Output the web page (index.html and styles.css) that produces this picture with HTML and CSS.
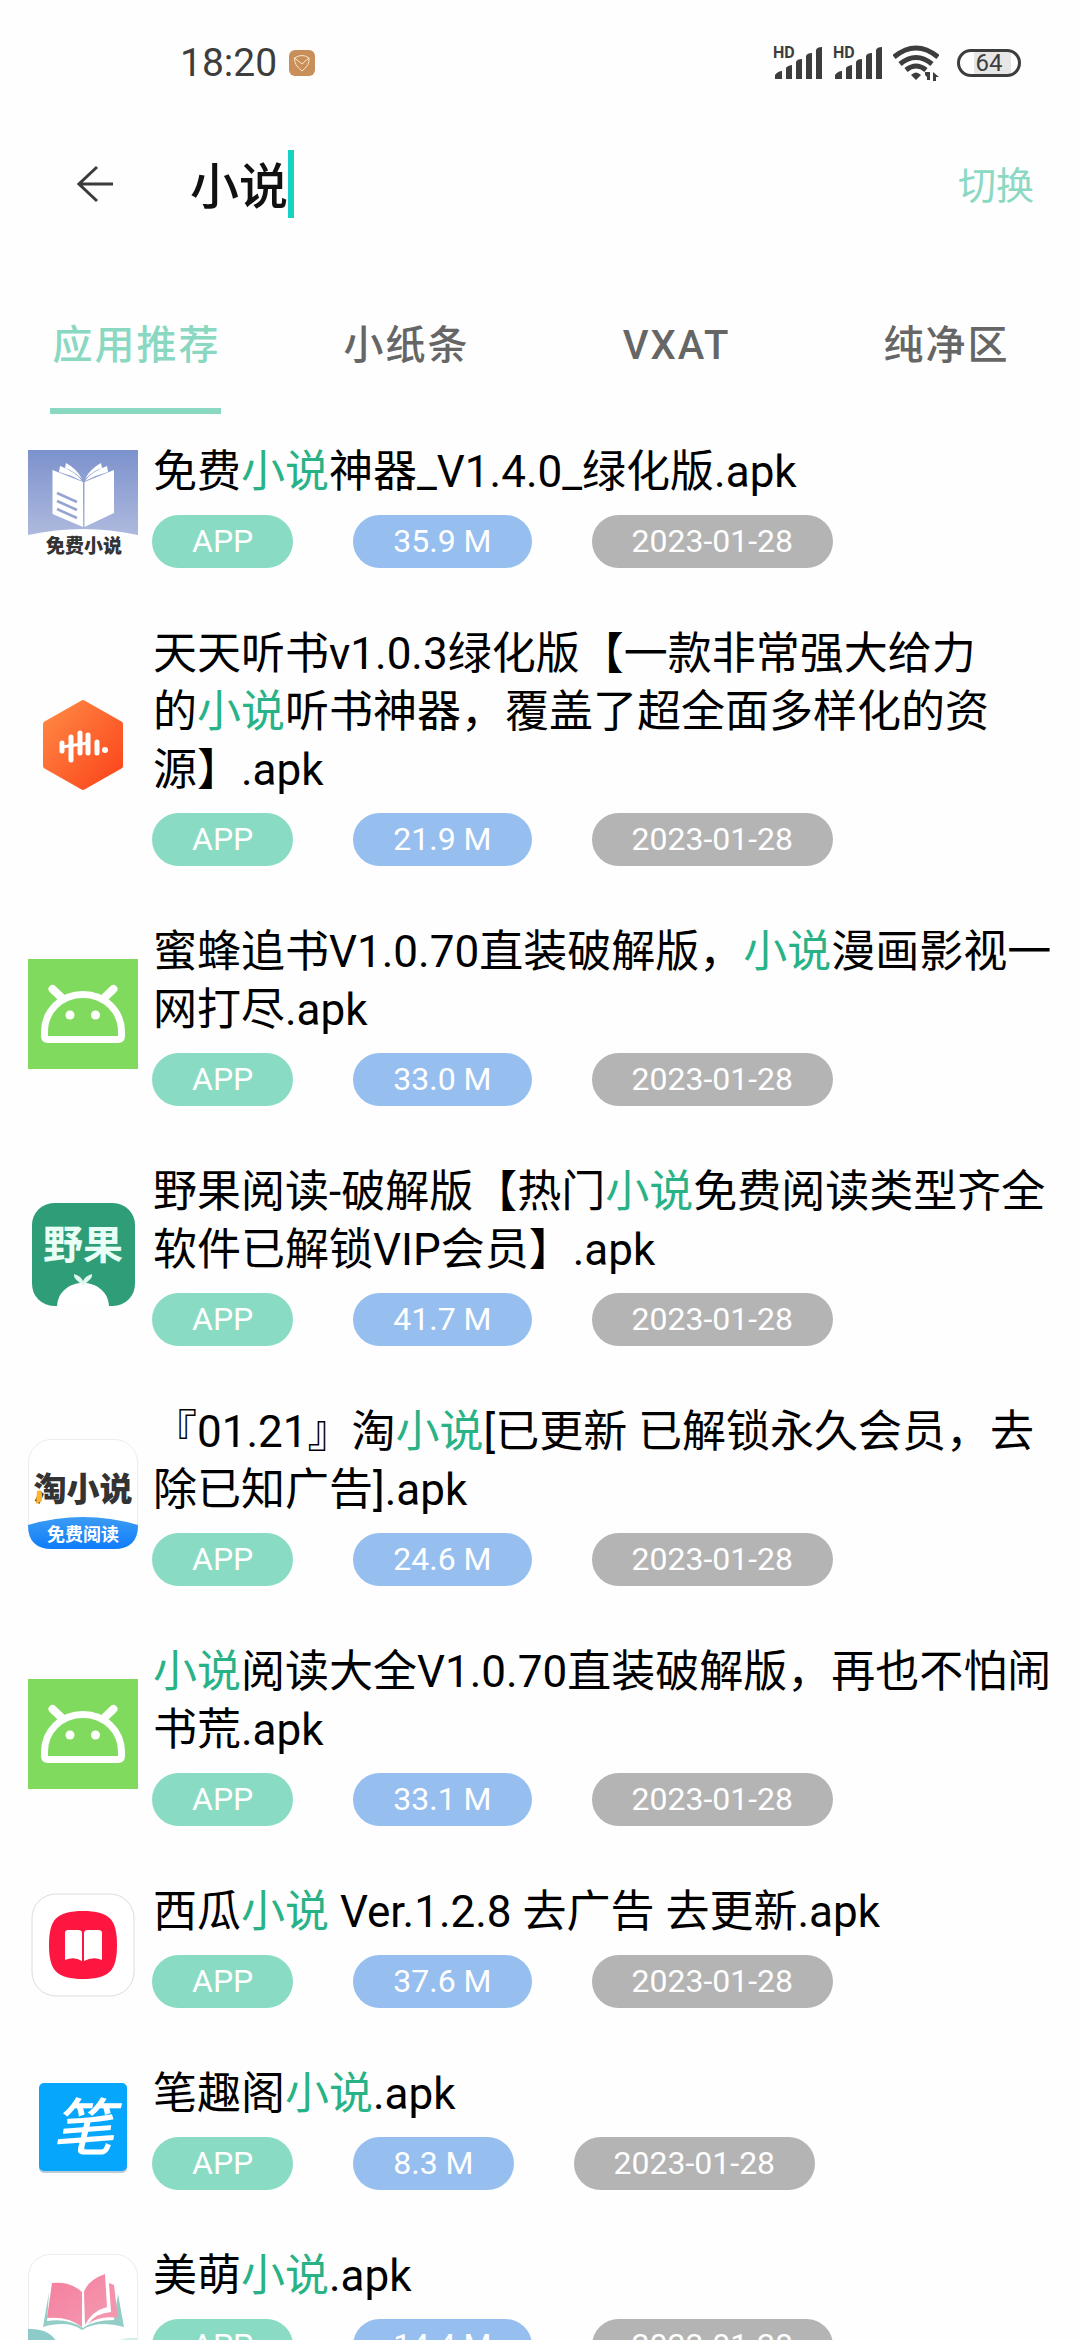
FILE: index.html
```html
<!DOCTYPE html>
<html lang="zh-CN">
<head>
<meta charset="utf-8">
<meta name="viewport" content="width=device-width, initial-scale=1">
<title>小说</title>
<link rel="stylesheet" href="styles.css">
</head>
<body>
<svg class="defs" aria-hidden="true">
  <defs>
    <linearGradient id="sky" x1="0" y1="0" x2="0" y2="1"><stop offset="0" stop-color="#7c92cd"/><stop offset="1" stop-color="#aeb9dd"/></linearGradient>
    <linearGradient id="flame" x1="0" y1="0" x2="1" y2="1"><stop offset="0" stop-color="#ff8a45"/><stop offset="1" stop-color="#fb431a"/></linearGradient>
    <linearGradient id="wave" x1="0" y1="0" x2="0" y2="1"><stop offset="0" stop-color="#3c9cf3"/><stop offset="1" stop-color="#0f7cfb"/></linearGradient>
    <linearGradient id="petal" x1="0" y1="0" x2="1" y2="1"><stop offset="0" stop-color="#f57f9c"/><stop offset="1" stop-color="#f39bb4"/></linearGradient>
    <symbol id="signal" viewBox="0 0 50 34">
      <path d="M2 33v-4q3-4 7-4v8zM13 33V22q1-2 6-3v14zM23 33V16q1-3 6-3v20zM33 33V10q1-3 6-3v26zM43 33V4q1-3 6-3v32z" fill="#3d3d3d"/>
    </symbol>
    <symbol id="robot" viewBox="0 0 110 110">
      <rect width="110" height="110" fill="#80da5d"/>
      <g fill="none" stroke="#fff" stroke-width="7">
        <path d="M20 80.500H90Q93.500 80.500 93.500 77V73C93.500 52 77 35.500 55 35.500S16.500 52 16.500 73V77Q16.500 80.500 20 80.500Z"/>
        <path d="M24.500 30 35 40M85.500 30 75 40" stroke-width="8" stroke-linecap="round"/>
      </g>
      <circle cx="42" cy="56" r="4.500" fill="#fff"/><circle cx="67.500" cy="56" r="4.500" fill="#fff"/>
    </symbol>
  </defs>
</svg>

<header>
  <div class="status">
    <span class="clock">18:20</span>
    <svg class="badge" viewBox="0 0 26 26" aria-hidden="true"><rect width="26" height="26" rx="6" fill="#c98f5a"/><path d="M5.500 8Q13 3 20 8Q21 15 13 21Q5 15 5.500 8L13 14L20 8" fill="none" stroke="#ffe6c4" stroke-width="1"/></svg>
    <div class="indicators">
      <span class="sim"><span class="hd">HD</span><svg viewBox="0 0 50 34" aria-hidden="true"><use href="#signal"/></svg></span>
      <span class="sim"><span class="hd">HD</span><svg viewBox="0 0 50 34" aria-hidden="true"><use href="#signal"/></svg></span>
      <svg class="wifi" viewBox="0 0 46 36" aria-hidden="true">
        <g fill="none" stroke="#3d3d3d" stroke-width="5"><path d="M1 12Q23-6 45 12"/><path d="M7 19Q23 6 39 19"/><path d="M13 25Q23 17 33 25"/></g>
        <path d="M18 30q5-5 10 0l-5 5z" fill="#3d3d3d"/>
        <path d="M32 30h5v5zV27h5v8h-3v-4zM40 36V27l6 5h-3v4z" fill="#3d3d3d"/>
      </svg>
      <span class="battery">64</span>
    </div>
  </div>
  <form class="search">
    <button class="back" type="button" aria-label="返回"><svg viewBox="0 0 36 38" aria-hidden="true"><path d="M20 2 2 19l18 17M2 19h34" fill="none" stroke="#3c3c3c" stroke-width="3"/></svg></button>
    <label class="field">
      <input type="text" value="小说" aria-label="搜索">
      <span class="caret"></span>
    </label>
    <button class="switch" type="button">切换</button>
  </form>
  <nav class="tabs">
    <a class="tab active" href="#apps">应用推荐</a>
    <a class="tab" href="#notes">小纸条</a>
    <a class="tab" href="#vxat">VXAT</a>
    <a class="tab" href="#clean">纯净区</a>
  </nav>
</header>

<main class="results" id="apps">
  <article class="item">
    <svg class="icon" viewBox="0 0 110 110" aria-hidden="true">
      <path d="M0 0H110V85Q55 73 0 85Z" fill="url(#sky)"/>
      <path d="M24.500 20 55 32V77L24.500 64ZM56.500 32 86 20V63L56.500 77Z" fill="#fff"/>
      <path d="M31 22 32 16Q48 22 54 31Q43 25 31 22ZM37 18 38 13Q49 19 54 29Q46 21 37 18ZM80 22 79 16Q63 22 57 31Q68 25 80 22ZM74 18 73 13Q62 19 57 29Q65 21 74 18Z" fill="#fff"/>
      <path d="M29 43 49 52M29 51 49 60M29 59 49 68" stroke="#95a4d3" stroke-width="2.500"/>
      <text x="56" y="103" text-anchor="middle" font-size="19" font-weight="900" fill="#333">免费小说</text>
    </svg>
    <div class="info">
      <h2>免费<em>小说</em>神器_V1.4.0_绿化版.apk</h2>
      <div class="tags"><span class="tag kind">APP</span><span class="tag size">35.9 M</span><time class="tag">2023-01-28</time></div>
    </div>
  </article>
  <article class="item">
    <svg class="icon" viewBox="0 0 110 110" aria-hidden="true">
      <path d="M55 13 92 34V76L55 97 18 76V34Z" fill="url(#flame)" stroke="url(#flame)" stroke-width="6" stroke-linejoin="round"/>
      <path d="M34 53V61M43 47V70M52 43V63M60 45V63M69 52V63" stroke="#fff" stroke-width="5" stroke-linecap="round"/>
      <path d="M34 57 60 53" stroke="#fff" stroke-width="3"/><circle cx="77" cy="60" r="3" fill="#fff"/>
    </svg>
    <div class="info">
      <h2>天天听书v1.0.3绿化版【一款非常强大给力<br>的<em>小说</em>听书神器，覆盖了超全面多样化的资<br>源】.apk</h2>
      <div class="tags"><span class="tag kind">APP</span><span class="tag size">21.9 M</span><time class="tag">2023-01-28</time></div>
    </div>
  </article>
  <article class="item">
    <svg class="icon" viewBox="0 0 110 110" aria-hidden="true"><use href="#robot"/></svg>
    <div class="info">
      <h2>蜜蜂追书V1.0.70直装破解版，<em>小说</em>漫画影视一<br>网打尽.apk</h2>
      <div class="tags"><span class="tag kind">APP</span><span class="tag size">33.0 M</span><time class="tag">2023-01-28</time></div>
    </div>
  </article>
  <article class="item">
    <svg class="icon" viewBox="0 0 110 110" aria-hidden="true">
      <rect x="4" y="4" width="103" height="103" rx="22" fill="#2f9e78"/>
      <text x="55" y="60" text-anchor="middle" font-size="40" font-weight="700" fill="#e9fff6">野果</text>
      <path d="M29 107C30 92 42 84 55 84S80 92 81 107Z" fill="#fff"/>
      <path d="M55 86Q45 80 46 75Q53 77 55 82Q57 77 64 75Q65 80 55 86Z" fill="#dff7ec"/>
    </svg>
    <div class="info">
      <h2>野果阅读-破解版【热门<em>小说</em>免费阅读类型齐全<br>软件已解锁VIP会员】.apk</h2>
      <div class="tags"><span class="tag kind">APP</span><span class="tag size">41.7 M</span><time class="tag">2023-01-28</time></div>
    </div>
  </article>
  <article class="item">
    <svg class="icon" viewBox="0 0 110 110" aria-hidden="true">
      <rect x=".5" y=".5" width="109" height="109" rx="23" fill="#fff" stroke="#ececec"/>
      <path d="M0 86Q55 70 110 86Q110 110 86 110H24Q0 110 0 86Z" fill="url(#wave)"/>
      <text x="55" y="62" text-anchor="middle" font-size="33" font-weight="900" fill="#333">淘小说</text>
      <path d="M9 52Q14 50 14 56V62L8 65Z" fill="#fbb62d"/>
      <text x="55" y="102" text-anchor="middle" font-size="18" font-weight="700" fill="#fff">免费阅读</text>
    </svg>
    <div class="info">
      <h2>『01.21』淘<em>小说</em>[已更新 已解锁永久会员，去<br>除已知广告].apk</h2>
      <div class="tags"><span class="tag kind">APP</span><span class="tag size">24.6 M</span><time class="tag">2023-01-28</time></div>
    </div>
  </article>
  <article class="item">
    <svg class="icon" viewBox="0 0 110 110" aria-hidden="true"><use href="#robot"/></svg>
    <div class="info">
      <h2><em>小说</em>阅读大全V1.0.70直装破解版，再也不怕闹<br>书荒.apk</h2>
      <div class="tags"><span class="tag kind">APP</span><span class="tag size">33.1 M</span><time class="tag">2023-01-28</time></div>
    </div>
  </article>
  <article class="item">
    <svg class="icon" viewBox="0 0 110 110" aria-hidden="true">
      <rect x="4" y="4" width="102" height="102" rx="24" fill="#fff" stroke="#dcdcdc"/>
      <path d="M55 21C81 21 89 29 89 55S81 89 55 89 21 81 21 55 29 21 55 21Z" fill="#fd1740"/>
      <path d="M37 43Q37 40 40 40H50Q54 40 54 43V71Q46 66 37 70ZM56 43Q56 40 60 40H70Q74 40 74 43V70Q65 66 56 71Z" fill="#fff"/>
    </svg>
    <div class="info">
      <h2>西瓜<em>小说</em> Ver.1.2.8 去广告 去更新.apk</h2>
      <div class="tags"><span class="tag kind">APP</span><span class="tag size">37.6 M</span><time class="tag">2023-01-28</time></div>
    </div>
  </article>
  <article class="item">
    <svg class="icon" viewBox="0 0 110 110" aria-hidden="true">
      <rect x="11" y="13" width="88" height="88" rx="5" fill="#b9cad6"/>
      <rect x="11" y="11" width="88" height="88" rx="5" fill="#06a6fd"/>
      <text x="55" y="78" text-anchor="middle" font-size="62" font-weight="500" font-style="italic" fill="#fff">笔</text>
    </svg>
    <div class="info">
      <h2>笔趣阁<em>小说</em>.apk</h2>
      <div class="tags"><span class="tag kind">APP</span><span class="tag size">8.3 M</span><time class="tag">2023-01-28</time></div>
    </div>
  </article>
  <article class="item">
    <svg class="icon" viewBox="0 0 110 110" aria-hidden="true">
      <rect x=".5" y=".5" width="109" height="109" rx="22" fill="#fff" stroke="#ececec"/>
      <path d="M0 75Q22 74 30 90V110H22Q0 108 0 88Z" fill="#8ccbc9"/>
      <path d="M110 84Q92 82 84 92V110H90Q110 108 110 88Z" fill="#d3f0ea"/>
      <path d="M21 38 15 73Q40 66 54 76Q70 66 96 73L90 40 86 66Q66 66 55 74Q40 64 19 67Z" fill="#93cdc6"/>
      <path d="M24 29Q42 27 54 38V73Q40 62 19 64ZM56 38Q60 26 77 20L79 53Q64 57 57 71ZM81 29 86 31 90 64Q72 61 60 70Q68 59 83 58Z" fill="url(#petal)"/>
    </svg>
    <div class="info">
      <h2>美萌<em>小说</em>.apk</h2>
      <div class="tags"><span class="tag kind">APP</span><span class="tag size">14.4 M</span><time class="tag">2023-01-28</time></div>
    </div>
  </article>
</main>
</body>
</html>
```

FILE: styles.css
```css
* { box-sizing: border-box; }

html { scrollbar-width: none; }

body {
  margin: 0;
  background: #fefefe;
  color: #000;
  font-family: Roboto, "Noto Sans CJK SC", sans-serif;
  text-spacing-trim: space-all;
}

button, input {
  border: 0;
  padding: 0;
  background: none;
  font: inherit;
  outline: 0;
}

.defs { position: absolute; width: 0; height: 0; }

.status {
  display: flex;
  align-items: center;
  height: 126px;
  padding: 0 59px 0 180px;
  gap: 12px;
  color: #3d3d3d;
}

.clock { font-size: 39px; font-weight: 400; }
.badge { width: 26px; height: 26px; }

.indicators {
  display: flex;
  align-items: center;
  gap: 10px;
  margin-left: auto;
}

.sim { position: relative; display: flex; }
.sim svg { width: 50px; height: 34px; }

.hd {
  position: absolute;
  left: 0;
  top: 0;
  font-size: 16px;
  line-height: 14px;
  font-weight: 700;
}

.wifi { width: 46px; height: 36px; }

.battery {
  width: 64px;
  height: 28px;
  margin-left: 8px;
  border: 3px solid #3d3d3d;
  border-radius: 14px;
  background: linear-gradient(to right, #fefefe 25%, #e6e6e6 25%, #e6e6e6 88%, #fefefe 88%);
  font-size: 24px;
  line-height: 23px;
  text-align: center;
}

.search {
  display: flex;
  align-items: center;
  height: 116px;
  padding: 0 46px 0 77px;
}

.back { display: flex; }
.back svg { width: 36px; height: 38px; }

.field {
  display: flex;
  align-items: center;
  flex: 1;
  margin-left: 77px;
}

.field input {
  width: 98px;
  height: 72px;
  padding-bottom: 4px;
  font-size: 49px;
  font-weight: 500;
  color: #111;
}

.caret { width: 6px; height: 68px; background: #16d3c1; }

.switch { padding-bottom: 4px; font-size: 38px; color: #8bd8c3; }

.tabs {
  display: grid;
  grid-template-columns: repeat(4, 1fr);
  justify-items: center;
  padding-top: 48px;
}

.tab {
  height: 124px;
  padding-left: 3px;
  border-bottom: 6px solid transparent;
  color: #666;
  font-size: 40px;
  font-weight: 500;
  line-height: 112px;
  letter-spacing: 2px;
  text-decoration: none;
}

.tab.active { color: #8ad8c2; border-color: #8ad8c2; }

.item {
  display: flex;
  align-items: center;
  gap: 14px;
  padding: 28px;
}

.icon { flex: none; width: 110px; height: 110px; }

.info {
  display: grid;
  gap: 14px;
  flex: 1;
}

h2 {
  margin: 0;
  padding: 1px 0 0 1px;
  font-size: 44px;
  font-weight: 400;
  line-height: 58px;
  white-space: nowrap;
}

em { font-style: normal; color: #28b286; }

.tags { display: flex; gap: 60px; }

.tag {
  padding: 0 40px;
  border-radius: 27px;
  background: #b4b4b4;
  color: #fff;
  font-size: 32px;
  line-height: 53px;
  white-space: nowrap;
}

.tag.kind { background: #8adbc3; }
.tag.size { background: #96bff0; }
```
